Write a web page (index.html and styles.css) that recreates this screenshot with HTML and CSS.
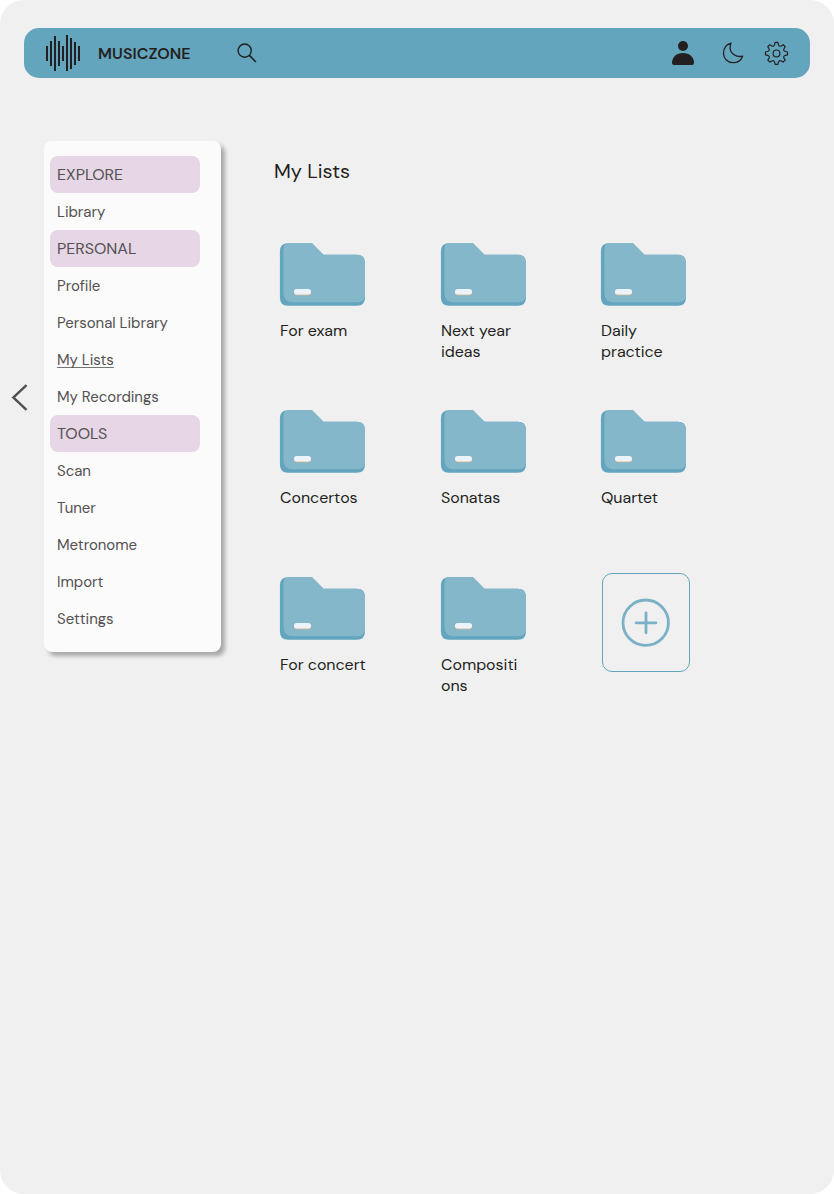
FILE: index.html
```html
<!DOCTYPE html>
<html lang="en">
<head>
<meta charset="utf-8">
<title>MusicZone – My Lists</title>
<link rel="stylesheet" href="styles.css">
</head>
<body>
<svg class="defs" width="0" height="0" aria-hidden="true">
  <symbol id="folder" viewBox="0 0 86 64">
    <path fill="#63a5bf" d="M9 .3H33L44.500 11.700H77.800Q86 11.700 86 20V54.500Q86 62.700 77.800 62.700H9Q.9 62.700 .9 54.500V8.500Q.9 .3 9 .3Z"/>
    <path fill="#84b7ca" d="M9 .3H33L44.500 11.700H77.800Q86 11.700 86 20V53.500Q84.500 59.300 78 59.300H14Q4.500 59.300 4.500 50V7Q4.500 2 7 .5Z"/>
    <rect x="15" y="46.700" width="17" height="5.500" rx="2.700" fill="#e5ba91"/>
    <rect x="15" y="45.900" width="17" height="5.500" rx="2.700" fill="#edf3fc"/>
  </symbol>
</svg>
<div class="screen">
  <header class="topbar">
    <svg class="logo" width="36" height="38" viewBox="0 0 36 38" stroke="#231f20" stroke-width="2"><path d="M3 12v15M7 7v25M11 2v35M15 7v25M19 12v15M23 1v36M27 4v31M31 8v23M35 12v15"/></svg>
    <span class="brand">MUSICZONE</span>
    <svg class="search" width="22" height="22" viewBox="0 0 22 22" fill="none" stroke="#231f20" stroke-width="1.400"><circle cx="8.700" cy="8.600" r="6.600"/><path d="M13.400 13.400l6.500 6.600" stroke-width="1.600"/></svg>
    <svg class="user" width="24" height="26" viewBox="0 0 24 26" fill="#231f20"><circle cx="12" cy="6" r="5"/><path d="M1 23C1 17 5.500 13 12 13s11 4 11 10q0 2-2 2H3q-2 0-2-2z"/></svg>
    <svg class="moon" width="24" height="24" viewBox="0 0 24 24" fill="none" stroke="#231f20" stroke-width="1.300" stroke-linejoin="round"><path d="M10 2.200C5.300 3.600 2.500 7.600 2.500 12.200c0 5.400 4.300 9.500 9.600 9.500 4.400 0 8-2.500 9.500-6.500C15.300 16.600 9.300 12.500 9.100 7c0-1.900.2-3.400.9-4.800z"/></svg>
    <svg class="gear" width="26" height="26" viewBox="-12.500 -13.400 26 26" fill="none" stroke="#231f20" stroke-width="1.200" stroke-linejoin="round"><path d="M-1.400-11H1.400L1.900-8.800Q2.800-6.400 4.700-7.500L6.650-8.700 8.700-6.650 7.500-4.700Q6.400-2.800 8.800-1.900L11-1.400V1.400L8.800 1.900Q6.400 2.800 7.500 4.700L8.700 6.650 6.650 8.700 4.700 7.500Q2.800 6.400 1.900 8.800L1.400 11H-1.400L-1.900 8.800Q-2.800 6.400-4.700 7.500L-6.650 8.700-8.700 6.650-7.500 4.700Q-6.400 2.800-8.800 1.900L-11 1.400V-1.400L-8.800-1.900Q-6.400-2.800-7.500-4.700L-8.700-6.650-6.650-8.700-4.700-7.500Q-2.800-6.400-1.900-8.800Z"/><circle r="3.400"/></svg>
  </header>
  <div class="content">
    <svg class="collapse" width="17" height="28" viewBox="0 0 17 28" fill="none" stroke="#535152" stroke-width="2.400"><path d="M15.500 1.200L2.300 13.500l13.200 12.300"/></svg>
    <nav class="sidebar">
      <div class="section">EXPLORE</div>
      <a class="item">Library</a>
      <div class="section">PERSONAL</div>
      <a class="item">Profile</a>
      <a class="item">Personal Library</a>
      <a class="item active">My Lists</a>
      <a class="item">My Recordings</a>
      <div class="section">TOOLS</div>
      <a class="item">Scan</a>
      <a class="item">Tuner</a>
      <a class="item">Metronome</a>
      <a class="item">Import</a>
      <a class="item">Settings</a>
    </nav>
    <main class="lists">
      <h1>My Lists</h1>
      <div class="grid">
        <div class="folder"><svg><use href="#folder"/></svg><span>For exam</span></div>
        <div class="folder"><svg><use href="#folder"/></svg><span>Next year<br>ideas</span></div>
        <div class="folder"><svg><use href="#folder"/></svg><span>Daily<br>practice</span></div>
        <div class="folder"><svg><use href="#folder"/></svg><span>Concertos</span></div>
        <div class="folder"><svg><use href="#folder"/></svg><span>Sonatas</span></div>
        <div class="folder"><svg><use href="#folder"/></svg><span>Quartet</span></div>
        <div class="folder"><svg><use href="#folder"/></svg><span>For concert</span></div>
        <div class="folder"><svg><use href="#folder"/></svg><span>Compositi<br>ons</span></div>
        <button class="add" aria-label="Add list"><svg width="50" height="50" viewBox="0 0 50 50" fill="none" stroke="#7ab1c6" stroke-width="2.800" stroke-linecap="round"><circle cx="24.700" cy="24.700" r="22.700"/><path d="M25 14.800v20M15 24.800h20"/></svg></button>
      </div>
    </main>
  </div>
</div>
</body>
</html>
```
FILE: styles.css
```css
* { box-sizing: border-box; }
body { margin: 0; background: #fff; font-family: "DM Sans", Lato, sans-serif; font-weight: 400; letter-spacing: -.03px; color: #231f20; }
svg { display: block; flex: none; }
.defs { position: absolute; }
.screen { width: 834px; height: 1194px; padding: 28px 24px 0; background: #f0f0f0; border-radius: 24px; }
.topbar { display: flex; align-items: center; height: 50px; padding: 0 20px; border-radius: 15px; background: #64a5be; }
.brand { width: 138px; margin-left: 18px; font-size: 16px; font-weight: 600; letter-spacing: .05px; white-space: nowrap; }
.user { margin-left: auto; }
.moon { margin-left: 26px; }
.gear { margin-left: 19px; }
.content { display: flex; align-items: flex-start; margin: 63px 0 0 -13px; }
.collapse { margin: 243px 16px 0 0; }
.sidebar { width: 177px; height: 511px; padding: 15px 21px 0 6px; border-radius: 8px; background: #fbfbfb; box-shadow: 4px 4px 4px rgba(0, 0, 0, .3); color: #535152; }
.section, .item { display: block; height: 37px; padding-left: 7px; line-height: 37px; white-space: nowrap; }
.section { border-radius: 8px; background: #e7d6e5; font-size: 16px; }
.item { padding-top: 1px; font-size: 15px; }
.active { text-decoration: underline; text-decoration-color: #757374; text-decoration-thickness: 1px; text-underline-offset: 2px; text-decoration-skip-ink: none; }
.lists { margin-left: 53px; }
h1 { margin: 17px 0 0; font-size: 20px; line-height: 26px; font-weight: inherit; letter-spacing: 0; }
.grid { display: grid; grid-template-columns: 161px 160px 90px; grid-auto-rows: 167px; margin: 59px 0 0 5px; }
.folder svg { width: 86px; height: 64px; }
.folder span { display: block; margin: 13px 0 0 1px; font-size: 16px; line-height: 21px; white-space: nowrap; }
.add { display: flex; align-items: center; justify-content: center; width: 88px; height: 99px; margin: -4px 0 0 2px; padding: 0; border: 1px solid #64a5be; border-radius: 10px; background: none; }
```
